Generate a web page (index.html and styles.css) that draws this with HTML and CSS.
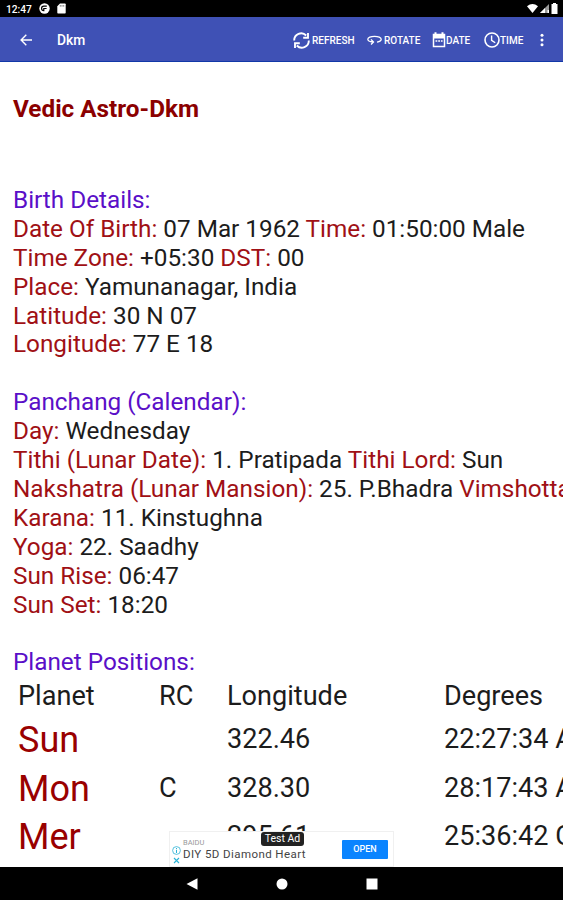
FILE: index.html
```html
<!DOCTYPE html>
<html lang="en">
<head>
    <meta charset="UTF-8">
    <meta name="viewport" content="width=device-width, initial-scale=1.0">
    <title>Vedic Astro</title>
    <link rel="stylesheet" href="styles.css">
</head>
<body>
<div class="screen">
    <div class="status-bar">
        <span class="clock">12:47</span>
        <svg class="status-icon" width="11" height="11" viewBox="0 0 11 11">
            <circle cx="5.5" cy="5.5" r="5.2" fill="#fff"/>
            <path d="M7.8 3.2H4.8a1.500 1.500 0 0 0 0 4.400V5.500h2.800" fill="none" stroke="#000" stroke-width="1.2"/>
        </svg>
        <svg class="status-icon sd" width="9" height="11" viewBox="0 0 9 11">
            <path d="M3 .5h5q.7 0 .7.7v8.6q0 .7-.7.7H1q-.7 0-.7-.7V3.300z" fill="#fff"/>
            <path d="M3.300 2v1.700M5 2v1.700M6.700 2v1.700" stroke="#555" stroke-width=".7"/>
        </svg>
        <div class="system-icons">
            <svg width="11" height="9" viewBox="0 0 11 9"><path d="M0 2.200Q5.500-2 11 2.200L5.500 9z" fill="#fff"/></svg>
            <svg width="9" height="9" viewBox="0 0 9 9"><path d="M0 9L9 0v9z" fill="#999"/><path d="M0 9l5-5v5zM7.500 6H9v3H7.500z" fill="#fff"/></svg>
            <svg width="7" height="11" viewBox="0 0 7 11"><path d="M2 0h3v1h1.500v10h-6V1H2z" fill="#fff"/></svg>
        </div>
    </div>

    <div class="toolbar">
        <svg class="back" width="12" height="12" viewBox="0 0 12 12" fill="none" stroke="#fff" stroke-width="1.400">
            <path d="M12 6H1.200M6.300.8L1.100 6l5.200 5.200"/>
        </svg>
        <span class="title">Dkm</span>
        <div class="action refresh">
            <svg width="17" height="17" viewBox="0 0 17 17" fill="none" stroke="#fff" stroke-width="1.900">
                <path d="M1.200 8.500a7 7 0 0 1 12-5M15 1v4.700h-4.800M15.800 8.500a7 7 0 0 1-12 5M2 16v-4.700h4.800"/>
            </svg>
            <span>REFRESH</span>
        </div>
        <div class="action rotate">
            <svg width="15" height="12" viewBox="0 0 15 12" fill="none" stroke="#fff" stroke-width="1.300">
                <path d="M6 8C2.500 7.800.8 6.800.8 5.300c0-1.800 3-3 6.700-3s6.700 1.200 6.700 3c0 1.300-1.600 2.400-4.200 2.800M4 5.400L6.500 8 4 10.500"/>
            </svg>
            <span>ROTATE</span>
        </div>
        <div class="action date">
            <svg width="14" height="16" viewBox="0 0 14 16">
                <path d="M1.500 2.500h11v12h-11z" fill="none" stroke="#fff" stroke-width="1.500"/>
                <path d="M1 2h12v4.500H1zM2.500.3h2V3h-2zM9.500.3h2V3h-2z" fill="#fff"/>
                <path d="M3.500 9h1.800M6.200 9H8M8.900 9h1.700" stroke="#fff" stroke-width="1.600"/>
            </svg>
            <span>DATE</span>
        </div>
        <div class="action time">
            <svg width="16" height="16" viewBox="0 0 16 16" fill="none" stroke="#fff">
                <circle cx="8" cy="8" r="7" stroke-width="1.600"/>
                <path d="M7.600 3.500v4.800l3.600 2.500" stroke-width="1.400"/>
            </svg>
            <span>TIME</span>
        </div>
        <svg class="more" width="4" height="14" viewBox="0 0 4 14" fill="#fff">
            <circle cx="2" cy="2.200" r="1.500"/><circle cx="2" cy="7" r="1.500"/><circle cx="2" cy="11.800" r="1.500"/>
        </svg>
    </div>

    <div class="report">
        <h1>Vedic Astro-Dkm</h1>

        <h2>Birth Details:</h2>
        <p><b>Date Of Birth:</b> 07 Mar 1962 <b>Time:</b> 01:50:00 Male</p>
        <p><b>Time Zone:</b> +05:30 <b>DST:</b> 00</p>
        <p><b>Place:</b> Yamunanagar, India</p>
        <p><b>Latitude:</b> 30 N 07</p>
        <p><b>Longitude:</b> 77 E 18</p>

        <h2>Panchang (Calendar):</h2>
        <p><b>Day:</b> Wednesday</p>
        <p><b>Tithi (Lunar Date):</b> 1. Pratipada <b>Tithi Lord:</b> Sun</p>
        <p><b>Nakshatra (Lunar Mansion):</b> 25. P.Bhadra <b>Vimshottari</b></p>
        <p><b>Karana:</b> 11. Kinstughna</p>
        <p><b>Yoga:</b> 22. Saadhy</p>
        <p><b>Sun Rise:</b> 06:47</p>
        <p><b>Sun Set:</b> 18:20</p>

        <h2>Planet Positions:</h2>
        <table>
            <tr class="head">
                <td class="planet">Planet</td>
                <td class="rc">RC</td>
                <td class="longitude">Longitude</td>
                <td class="degrees">Degrees</td>
            </tr>
            <tr>
                <td class="name">Sun</td>
                <td></td>
                <td>322.46</td>
                <td>22:27:34 Aqu</td>
            </tr>
            <tr>
                <td class="name">Mon</td>
                <td>C</td>
                <td>328.30</td>
                <td>28:17:43 Aqu</td>
            </tr>
            <tr>
                <td class="name">Mer</td>
                <td></td>
                <td>295.61</td>
                <td>25:36:42 Cap</td>
            </tr>
        </table>
    </div>

    <!-- banner sits over the bottom of the report -->
    <div class="ad">
        <div class="ad-marks">
            <svg width="9" height="9" viewBox="0 0 9 9" fill="none" stroke="#2bb3d6">
                <circle cx="4.500" cy="4.500" r="3.900" stroke-width=".8"/><path d="M4.500 2v1M4.500 3.800V7"/>
            </svg>
            <svg width="7" height="7" viewBox="0 0 7 7" stroke="#2bb3d6" stroke-width="1.100"><path d="M1 1l5 5M6 1L1 6"/></svg>
        </div>
        <div class="ad-text">
            <span class="brand">BAIDU</span>
            <span class="headline">DIY 5D Diamond Heart</span>
        </div>
        <button class="open">OPEN</button>
        <span class="test-ad">Test Ad</span>
    </div>

    <div class="nav-bar">
        <svg width="12" height="12" viewBox="0 0 12 12"><path d="M.5 6L11.500.3v11.400z" fill="#fff"/></svg>
        <svg width="12" height="12" viewBox="0 0 12 12"><circle cx="6" cy="6" r="5.500" fill="#fff"/></svg>
        <svg width="12" height="12" viewBox="0 0 12 12"><path d="M.5.5h11v11H.5z" fill="#fff"/></svg>
    </div>
</div>
</body>
</html>
```
FILE: styles.css
```css
body {
    margin: 0;
    font-family: Roboto, sans-serif;
    background: #fff;
}

.screen {
    position: relative;
    display: flex;
    flex-direction: column;
    width: 563px;
    height: 900px;
    overflow: hidden;
}

.status-bar {
    display: flex;
    align-items: center;
    flex: none;
    height: 17px;
    padding: 0 5px 0 6px;
    background: #000;
    color: #fff;
}

.clock {
    width: 33px;
    padding-top: 1px;
    font-size: 10.2px;
    font-weight: 500;
}

.sd {
    margin-left: 7px;
}

.system-icons {
    display: flex;
    align-items: center;
    gap: 2px;
    margin-left: auto;
}

.toolbar {
    display: flex;
    align-items: center;
    flex: none;
    box-sizing: border-box;
    height: 45px;
    padding: 2px 19px 0 20px;
    border-bottom: 1px solid #1238a8;
    background: #3f51b5;
    color: #fff;
}

.title {
    flex: 1;
    margin-left: 25px;
    font-size: 13.8px;
    font-weight: 500;
}

.action {
    display: flex;
    align-items: center;
    gap: 2px;
    font-size: 10px;
    font-weight: 500;
}

.action span {
    white-space: nowrap;
}

.refresh {
    width: 74px;
}

.rotate {
    width: 65px;
}

.date {
    width: 52px;
    gap: 0;
}

.time {
    width: 56px;
    gap: 0;
}

.report {
    flex: 1;
    min-height: 0;
    padding: 33px 0 0 13px;
    overflow: hidden;
    color: #1c1c1c;
    font-size: 24.3px;
    line-height: 28.9px;
    white-space: nowrap;
}

h1 {
    margin: 0 0 62px;
    color: #8b0000;
    font-size: 24.3px;
    font-weight: 700;
}

h2 {
    margin: 28.9px 0 0;
    color: #5a0fc8;
    font-size: 24.3px;
    font-weight: 400;
}

p {
    margin: 0;
}

b {
    color: #a01015;
    font-weight: 400;
}

table {
    width: 700px;
    border-collapse: collapse;
    table-layout: fixed;
    font-size: 27.1px;
}

td {
    height: 48.6px;
    padding: 0 0 0 5px;
}

.head td {
    height: 38px;
}

td.name {
    padding-top: 2px;
    height: 46.6px;
    color: #990000;
    font-size: 36px;
}

.planet {
    width: 136px;
}

.rc {
    width: 63px;
}

.longitude {
    width: 212px;
}

.ad {
    position: absolute;
    left: 169px;
    top: 831px;
    display: flex;
    align-items: center;
    box-sizing: border-box;
    width: 225px;
    height: 36px;
    padding: 0 5px 0 2px;
    border: 1px solid #f0f0f0;
    background: #fff;
}

.ad-marks {
    display: flex;
    flex-direction: column;
    align-items: center;
    gap: 2px;
    padding-top: 11px;
}

.ad-text {
    display: flex;
    flex: 1;
    flex-direction: column;
    padding: 0 0 0 2px;
    white-space: nowrap;
}

.brand {
    color: #999;
    font-size: 7.5px;
}

.headline {
    color: #444;
    font-size: 11.5px;
    line-height: 14px;
    letter-spacing: 0.42px;
}

.open {
    width: 46px;
    height: 19px;
    padding: 0;
    border: 0;
    border-radius: 1px;
    background: #0a84ff;
    color: #fff;
    font: 500 9px Roboto, sans-serif;
}

.test-ad {
    position: absolute;
    left: 91px;
    top: 0;
    width: 43px;
    height: 14px;
    border-radius: 3px;
    background: #222;
    color: #fff;
    font-size: 10.5px;
    line-height: 14px;
    text-align: center;
}

.nav-bar {
    display: flex;
    align-items: center;
    justify-content: center;
    flex: none;
    gap: 78px;
    height: 33px;
    background: #000;
}
```
